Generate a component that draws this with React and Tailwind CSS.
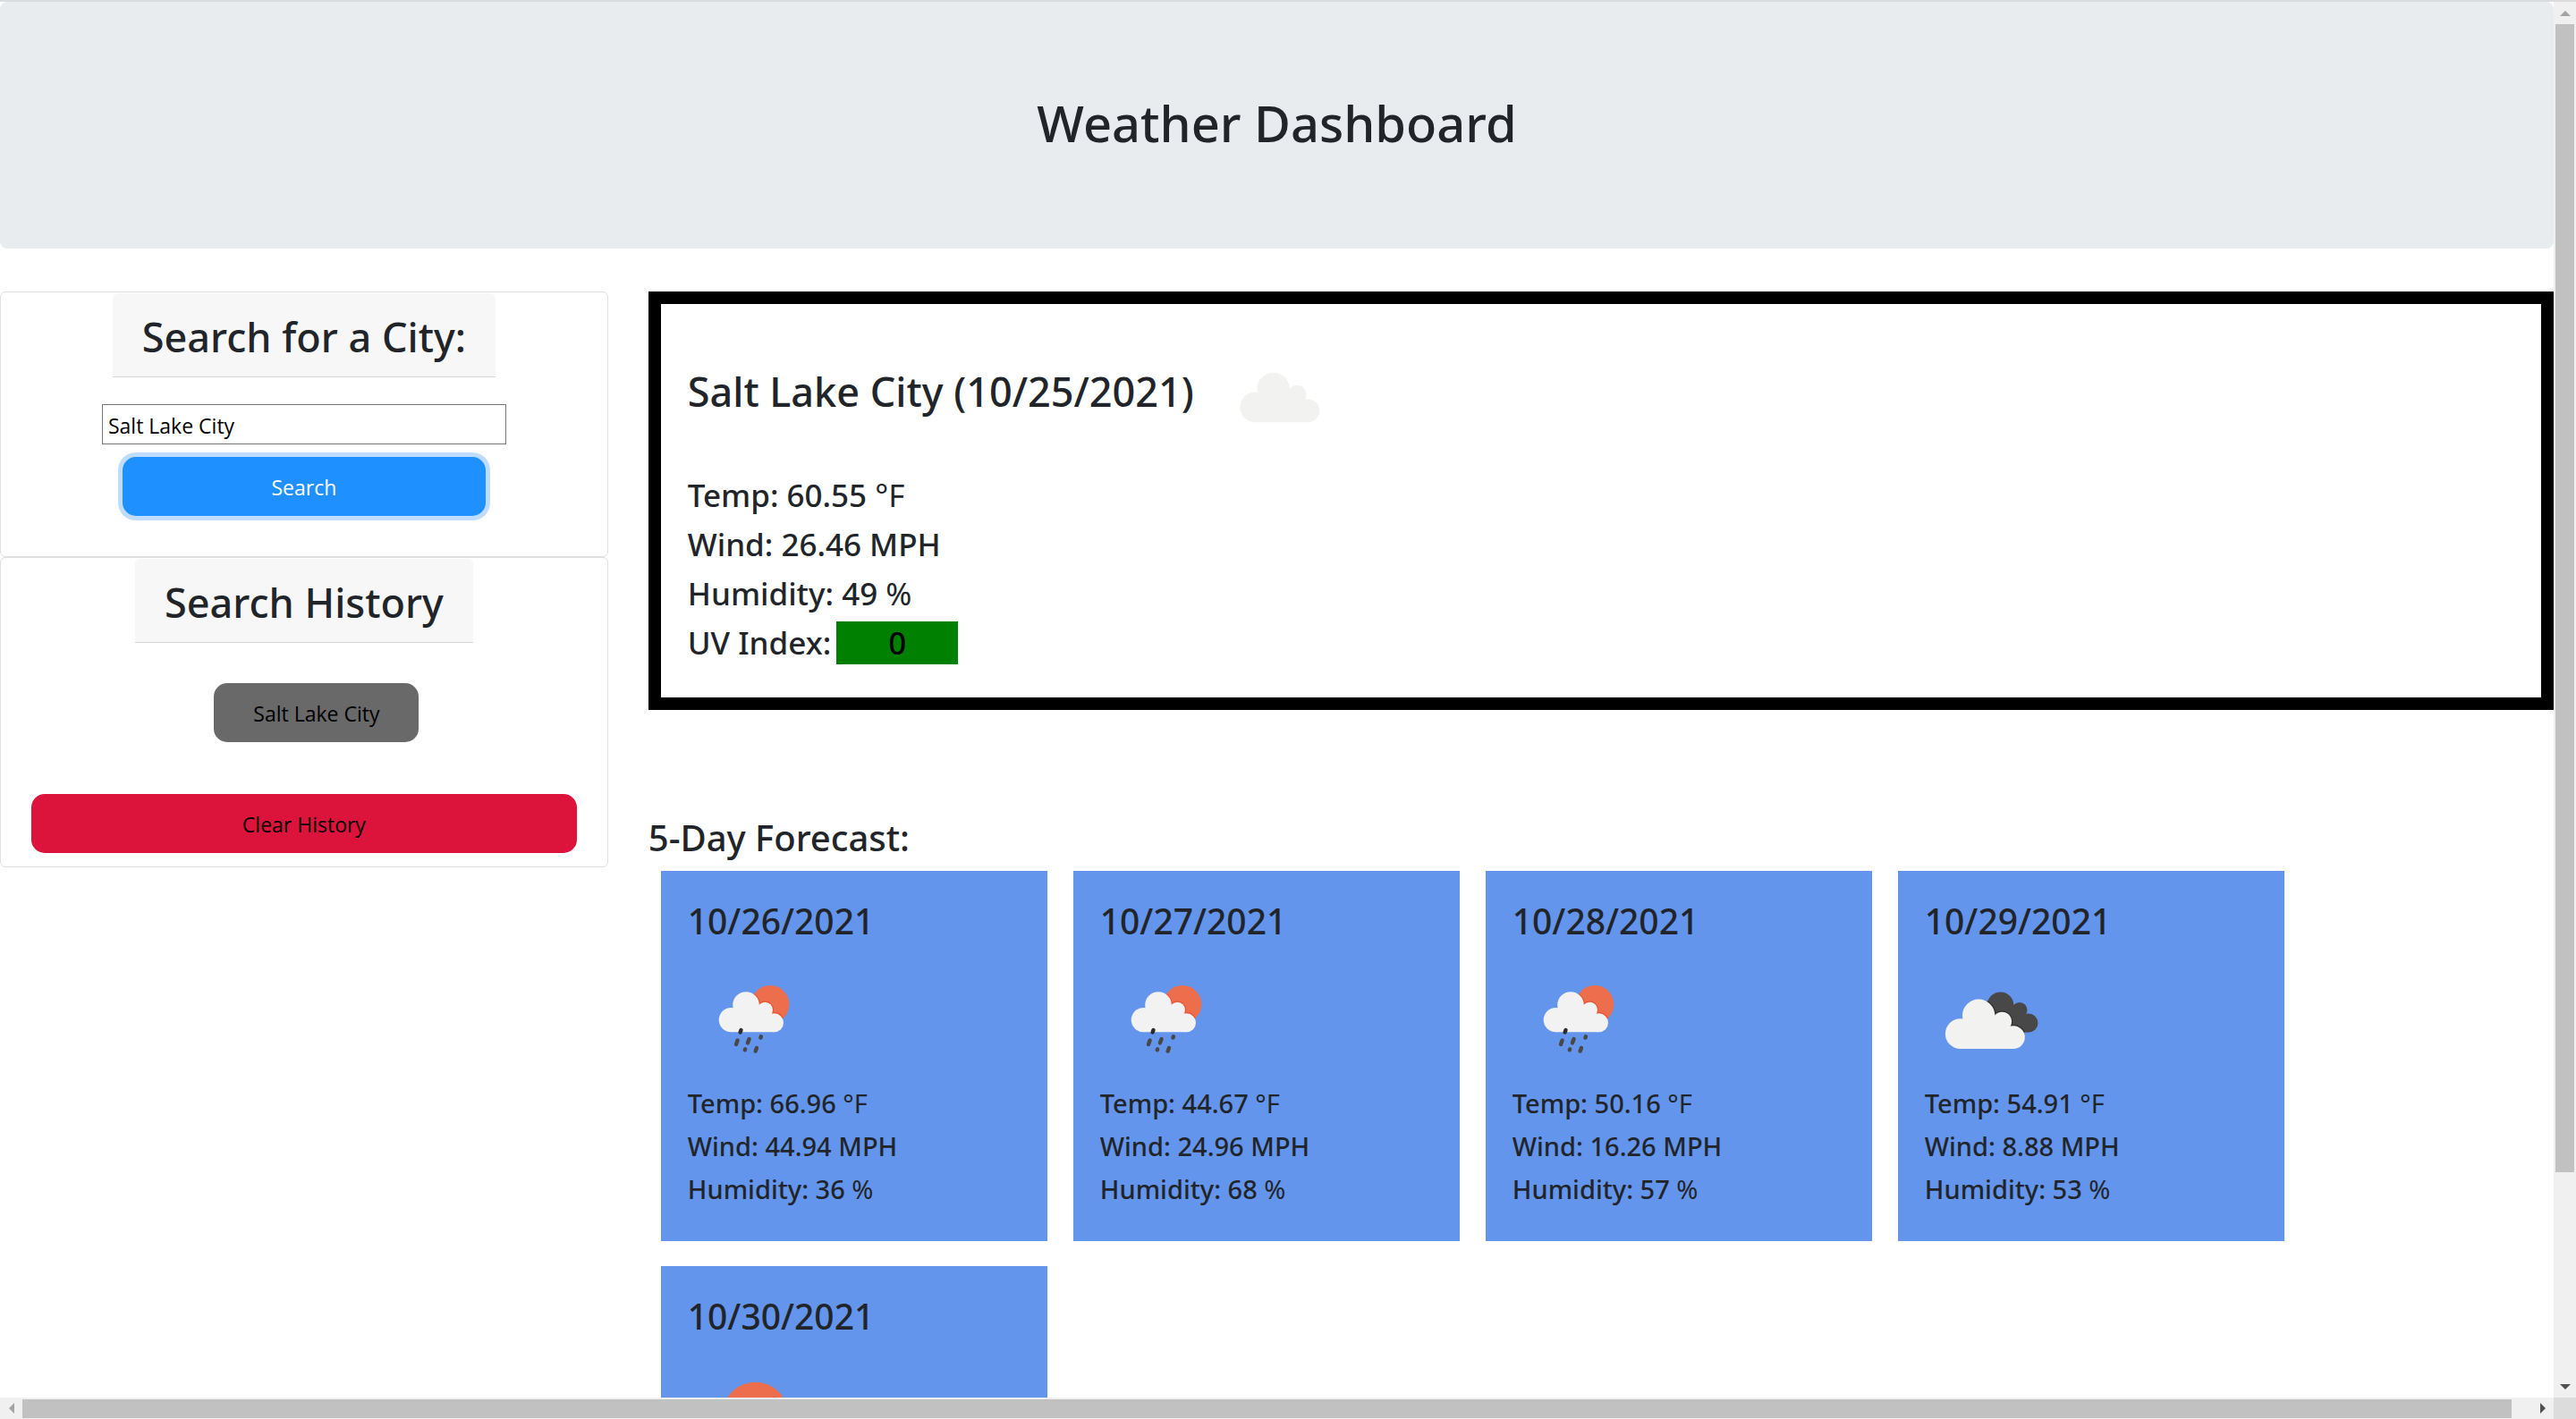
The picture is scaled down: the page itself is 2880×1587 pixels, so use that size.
import React, { useState } from "react";

const FORECAST = [
  { date: "10/26/2021", icon: "rain", temp: "66.96", wind: "44.94", humidity: "36" },
  { date: "10/27/2021", icon: "rain", temp: "44.67", wind: "24.96", humidity: "68" },
  { date: "10/28/2021", icon: "rain", temp: "50.16", wind: "16.26", humidity: "57" },
  { date: "10/29/2021", icon: "broken", temp: "54.91", wind: "8.88", humidity: "53" },
  { date: "10/30/2021", icon: "sun" },
];

function Cloud(props) {
  return (
    <g {...props}>
      <circle cx="48.4" cy="75.6" r="13.7" />
      <circle cx="65" cy="59" r="14.8" />
      <circle cx="86.3" cy="64.4" r="8.7" />
      <circle cx="96.5" cy="78.8" r="10.5" />
      <path d="M48.4 89.3 L48.4 70 L65 60 L86.3 62 L96.5 76 L96.5 89.3 Z" />
    </g>
  );
}

function CloudyIcon() {
  return (
    <svg className="h-[150px] w-[150px] shrink-0" viewBox="0 0 150 150" role="img" aria-label="Cloudy">
      <Cloud fill="#f2f2f0" transform="translate(-12.3 -0.6) scale(1.23)" />
    </svg>
  );
}

function ForecastIcon({ kind }) {
  return (
    <svg className="mt-2.5 h-[145px] w-[150px]" viewBox="0 0 150 145" role="img" aria-label={kind}>
      <defs>
        <clipPath id="sun-behind">
          <circle cx="92" cy="58.3" r="21.3" />
        </clipPath>
        <clipPath id="cloud-behind">
          <circle cx="84" cy="58.8" r="14.8" />
          <circle cx="105.8" cy="64.7" r="8.7" />
          <circle cx="116" cy="79.1" r="10.5" />
          <path d="M84 60 L105.8 62 L116 76 L116 89.6 L84 89.6 Z" />
        </clipPath>
      </defs>
      {kind === "sun" && <circle cx="75.5" cy="75.5" r="36.8" fill="#ec6e4c" />}
      {kind === "rain" && (
        <>
          <circle cx="92" cy="58.3" r="21.3" fill="#ec6e4c" />
          <g clipPath="url(#sun-behind)">
            <Cloud fill="#ea5230" stroke="#ea5230" strokeWidth="2.4" />
          </g>
          <Cloud fill="#f2f2f2" />
          <g stroke="#484849" strokeWidth="4.4" strokeLinecap="round">
            <path d="M58.6 89.4 L59.5 87" stroke="#2b2b2b" />
            <path d="M54 103 L55.6 98.6" />
            <path d="M66.9 101.4 L68.6 97" />
            <path d="M81.4 95.6 L81.9 94.3" />
            <path d="M63.8 109.2 L64.1 108.4" />
            <path d="M75.6 110.6 L77 107" />
          </g>
        </>
      )}
      {kind === "broken" && (
        <>
          <Cloud fill="#484849" transform="translate(19.5 0.3)" />
          <g clipPath="url(#cloud-behind)">
            <Cloud fill="#2e2e2e" stroke="#2e2e2e" strokeWidth="2" transform="translate(-19.8 -1.8) scale(1.23)" />
          </g>
          <Cloud fill="#f2f2f1" transform="translate(-19.8 -1.8) scale(1.23)" />
        </>
      )}
    </svg>
  );
}

function PanelTitle({ children }) {
  return (
    <h2 className="rounded-t-md border-b border-[#d4d4d4] bg-[#f7f7f7] px-[33px] pt-[22px] pb-[17px] text-[45px] leading-[54px] font-medium">
      {children}
    </h2>
  );
}

function ForecastCard({ date, icon, temp, wind, humidity }) {
  return (
    <article className="w-[432px] bg-[#6495ed] px-[30px] pt-[30px] pb-[34px]">
      <h4 className="text-[39px] leading-[51px] font-medium">{date}</h4>
      <ForecastIcon kind={icon} />
      {temp && (
        <div className="text-[29px] leading-[48px] font-medium">
          <p>Temp: {temp} <span className="font-normal">°F</span></p>
          <p>Wind: {wind} MPH</p>
          <p>Humidity: {humidity} <span className="font-normal">%</span></p>
        </div>
      )}
    </article>
  );
}

function Arrow({ d, color }) {
  return (
    <svg className="h-3 w-3" viewBox="0 0 12 12" aria-hidden="true">
      <path d={d} fill={color} />
    </svg>
  );
}

export default function App() {
  const [city, setCity] = useState("Salt Lake City");
  const [history, setHistory] = useState(["Salt Lake City"]);

  return (
    <div className="grid h-screen grid-cols-[minmax(0,1fr)_25px] grid-rows-[2px_minmax(0,1fr)_24px] bg-white font-['Noto_Sans',sans-serif] text-[#212529]">
      <div className="col-span-2 bg-[#dadbdc]" />

      <div className="overflow-hidden">
        <header className="rounded-lg bg-[#e8ecef] pt-[99px] pb-[105px] text-center">
          <h1 className="text-[56px] leading-[72px] font-medium">Weather Dashboard</h1>
        </header>

        <div className="mt-12 flex items-start">
          <aside className="w-1/4 pr-[34px]">
            <form
              className="flex flex-col items-center rounded-md border border-[#dfdfdf] pt-px pb-[45px] font-['Open_Sans',sans-serif] text-[23px]"
              onSubmit={(e) => e.preventDefault()}
            >
              <label htmlFor="city" className="font-['Noto_Sans',sans-serif]">
                <PanelTitle>Search for a City:</PanelTitle>
              </label>
              <input
                id="city"
                type="text"
                value={city}
                onChange={(e) => setCity(e.target.value)}
                className="mt-[30px] h-[45px] w-2/3 border border-[#767676] bg-white px-1.5 pt-0.5 text-black outline-none"
              />
              <button
                type="submit"
                className="mt-3.5 h-[66px] w-3/5 rounded-[15px] bg-[#1e90ff] pt-0.5 text-white ring-[5px] ring-[#bfdeff]"
              >
                Search
              </button>
            </form>

            <section className="flex flex-col items-center rounded-md border border-[#dfdfdf] pt-px pb-[15px] text-[23px]">
              <PanelTitle>Search History</PanelTitle>
              <div className="mt-[45px] ml-7 flex min-h-[66px] flex-col gap-4 font-['Open_Sans',sans-serif]">
                {history.map((name) => (
                  <button
                    key={name}
                    type="button"
                    onClick={() => setCity(name)}
                    className="h-[66px] rounded-[15px] bg-[#696969] px-11 pt-0.5 text-black"
                  >
                    {name}
                  </button>
                ))}
              </div>
              <button
                type="button"
                onClick={() => setHistory([])}
                className="mt-[58px] h-[66px] w-[90%] rounded-[15px] bg-[#dc143c] pt-0.5 font-['Open_Sans',sans-serif] text-black"
              >
                Clear History
              </button>
            </section>
          </aside>

          <main className="min-w-0 flex-1 pl-[11px]">
            <section className="border-[14px] border-black px-[30px] pt-[23px] pb-[34px]">
              <div className="flex items-center gap-[21px]">
                <h2 className="text-[45px] leading-[54px] font-medium">Salt Lake City (10/25/2021)</h2>
                <CloudyIcon />
              </div>
              <div className="mt-[13px] text-[35px] leading-[55px] font-medium">
                <p>Temp: 60.55 <span className="font-normal">°F</span></p>
                <p>Wind: 26.46 MPH</p>
                <p>Humidity: 49 <span className="font-normal">%</span></p>
                <div className="flex items-center gap-1.5">
                  <span>UV Index:</span>
                  <span className="w-[136px] bg-[#008000] text-center leading-[48px] text-black">0</span>
                </div>
              </div>
            </section>

            <h3 className="mt-[118px] text-[40px] leading-[50px] font-medium">5-Day Forecast:</h3>
            <div className="mt-3 ml-3.5 flex flex-wrap items-start gap-x-[29px] gap-y-7">
              {FORECAST.map((day) => (
                <ForecastCard key={day.date} {...day} />
              ))}
            </div>
          </main>
        </div>
      </div>

      <div className="flex flex-col items-center bg-[#f0f0f0]">
        <div className="flex h-[25px] items-center"><Arrow d="M6 3 L12 9 L0 9 Z" color="#a3a3a3" /></div>
        <div className="flex w-full flex-1 flex-col items-center">
          <div className="h-[85%] w-[21px] bg-[#c1c1c1]" />
        </div>
        <div className="flex h-[25px] items-center"><Arrow d="M0 3 L12 3 L6 9 Z" color="#505050" /></div>
      </div>

      <div className="flex items-center bg-[#f0f0f0]">
        <div className="flex w-[25px] justify-center"><Arrow d="M3 6 L9 0 L9 12 Z" color="#a3a3a3" /></div>
        <div className="flex-1 pr-[22px]">
          <div className="h-[21px] bg-[#c1c1c1]" />
        </div>
        <div className="flex w-[25px] justify-center"><Arrow d="M3 0 L9 6 L3 12 Z" color="#505050" /></div>
      </div>
      <div className="bg-[#dcdcdc]" />
    </div>
  );
}
